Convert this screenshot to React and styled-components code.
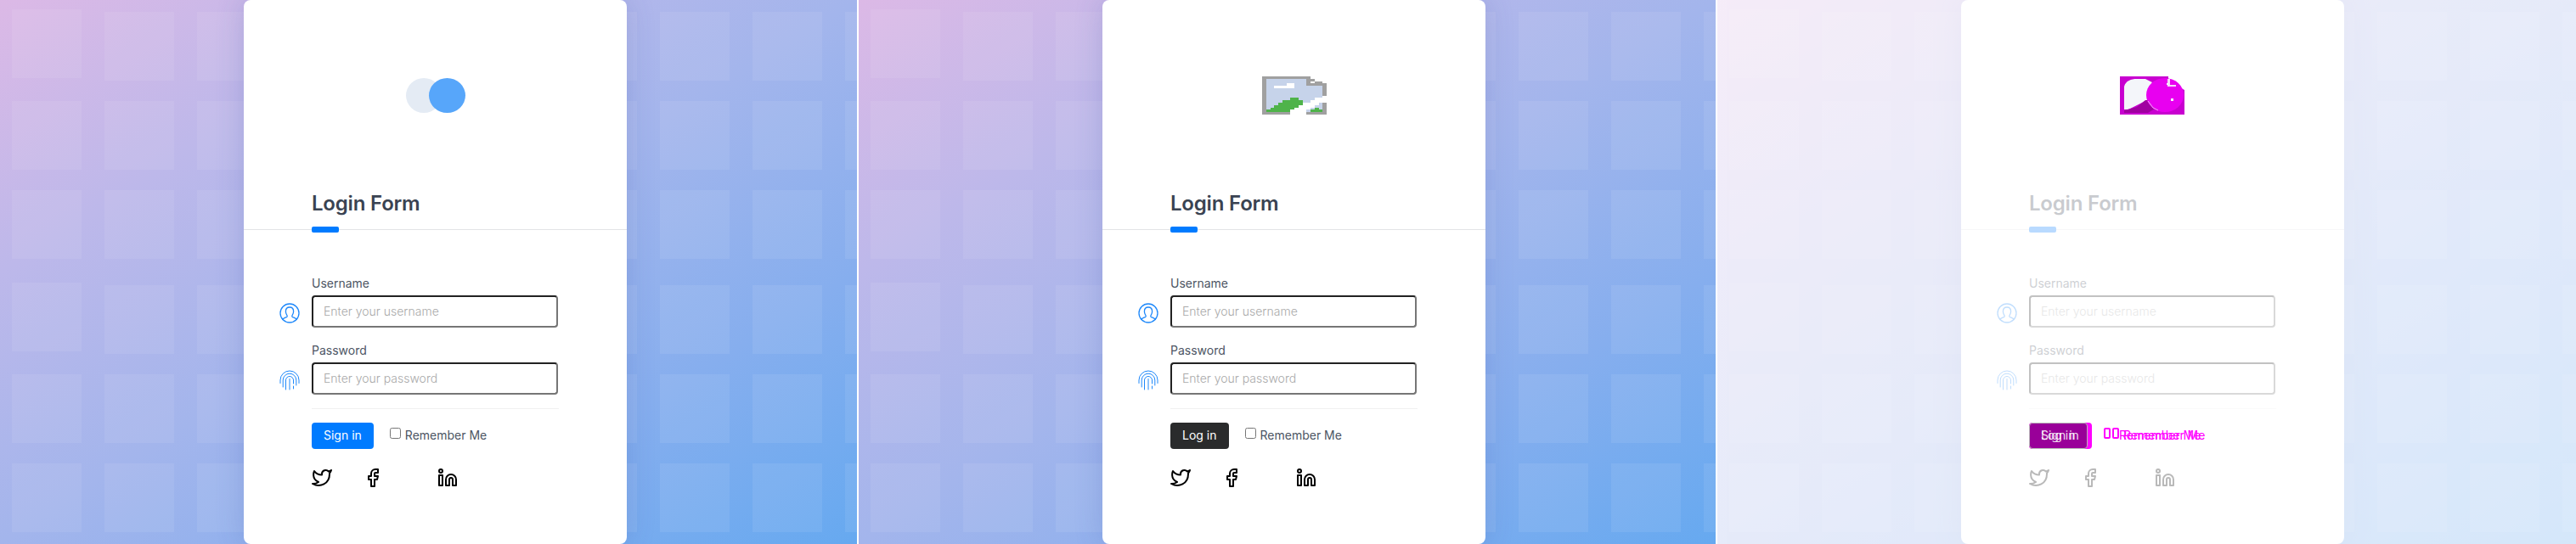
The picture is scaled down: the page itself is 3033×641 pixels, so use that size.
import React from "react"
import styled, { createGlobalStyle } from "styled-components"
import { FiTwitter, FiFacebook, FiLinkedin } from "react-icons/fi"

const GlobalStyle = createGlobalStyle`
  html, body {
    margin: 0;
    padding: 0;
    background: #fff;
    overflow: hidden;
  }
  * {
    box-sizing: border-box;
  }
`

const Page = styled.div`
  display: flex;
  gap: 2px;
  width: 3033px;
  height: 641px;
  background: #fff;
  font-family: Inter, "Noto Sans", sans-serif;
  overflow: hidden;
`

const Panel = styled.section`
  position: relative;
  flex: ${({ $last }) => ($last ? "1 0 1009px" : "0 0 1009px")};
  height: 641px;
  overflow: hidden;
`

const Faded = styled.div`
  position: relative;
  height: 100%;
  opacity: ${({ $amount }) => $amount};
`

const Backdrop = styled.div`
  position: relative;
  height: 100%;
  padding-left: 287px;
  background: linear-gradient(
    to bottom right,
    #dcb9e6 0%,
    #bdb8ea 25%,
    #a3b5ec 50%,
    #86aeee 75%,
    #66a9f0 100%
  );
`

const TileLayer = styled.div`
  position: absolute;
  inset: 0;
  padding: 14px 0 0 14px;
`

const TileRow = styled.div`
  display: flex;
  gap: 27px;
  margin-top: ${({ $gap }) => $gap}px;
`

const Tile = styled.div`
  flex: 0 0 82px;
  height: 81px;
  background: rgba(255, 255, 255, 0.08);
  transform: translateY(${({ $lift }) => ($lift ? -3 : 0)}px);
`

const Card = styled.div`
  position: relative;
  width: 451px;
  height: 641px;
  background: #fff;
  border-radius: 8px;
  box-shadow: 0 0 34px rgba(50, 70, 160, 0.2);
`

const LogoArea = styled.div`
  display: flex;
  align-items: center;
  justify-content: center;
  height: 225px;
`

const CardHeader = styled.div`
  position: relative;
  height: 46px;
  padding: 0 80px;
  border-bottom: 1px solid #e3e4e6;
`

const Title = styled.h2`
  margin: 0;
  font-size: 24px;
  line-height: 29px;
  font-weight: 600;
  letter-spacing: -0.2px;
  color: #3a4352;
`

const TitleBar = styled.span`
  position: absolute;
  left: 80px;
  bottom: -4px;
  width: 32px;
  height: 7px;
  border-radius: 2px;
  background: #007bff;
`

const Form = styled.form`
  padding: 52px 80px 0;
`

const Field = styled.div`
  margin-bottom: 16px;
`

const Label = styled.label`
  display: block;
  margin-bottom: 4px;
  font-size: 14px;
  line-height: 21px;
  color: #4c5563;
`

const FieldRow = styled.div`
  display: flex;
  align-items: center;
  gap: 14px;
  margin-left: -38px;
`

const FieldIcon = styled.svg`
  flex: 0 0 24px;
  width: 24px;
  height: 24px;
  margin-top: 3px;
  fill: none;
  stroke: #1e88fa;
  stroke-width: ${({ $thin }) => ($thin ? 1 : 1.3)};
  stroke-linecap: round;
`

const Input = styled.input`
  width: 290px;
  height: 38px;
  padding: 0 12px 2px;
  border-width: 2px;
  border-style: solid;
  border-color: #222 #767676 #767676 #222;
  border-radius: 4px;
  background: #fff;
  font-family: inherit;
  font-size: 14px;
  font-weight: 300;
  outline: none;

  &::placeholder {
    color: #a9a9a9;
  }
`

const Rule = styled.hr`
  height: 1px;
  margin: 0 0 16px;
  border: 0;
  background: #f0f0f0;
`

const Actions = styled.div`
  display: flex;
  align-items: center;
  height: 31px;
  visibility: ${({ $hidden }) => ($hidden ? "hidden" : "visible")};
`

const SubmitButton = styled.button`
  height: 31px;
  padding: 0 14px 2px;
  border: 0;
  border-radius: 4px;
  background: ${({ $dark }) => ($dark ? "#2a2b2c" : "#007bff")};
  color: #fff;
  font-family: inherit;
  font-size: 14px;
`

const Remember = styled.label`
  display: flex;
  align-items: center;
  margin-left: 19px;
  padding-bottom: 3px;
  font-size: 14px;
  color: #4c5563;
`

const Check = styled.input`
  width: 13px;
  height: 13px;
  margin: -3px 5px 0 0;
`

const Socials = styled.div`
  display: flex;
  margin-top: 22px;
`

const SocialLink = styled.a`
  display: block;
  width: ${({ $width }) => $width}px;
  height: 24px;
  color: #000;
`

const PixelIcon = styled.svg`
  display: block;
  width: 76px;
  height: 45px;
  shape-rendering: crispEdges;
`

const CirclesIcon = styled.svg`
  display: block;
  width: 76px;
  height: 45px;
`

const DiffLogo = styled.svg`
  position: absolute;
  left: 474px;
  top: 90px;
  width: 76px;
  height: 45px;
`

const DiffButton = styled.div`
  position: absolute;
  left: 367px;
  top: 498px;
  width: 74px;
  height: 31px;
  border-radius: 4px;
  background: #ff00ff;
`

const DiffButtonInner = styled.div`
  width: 69px;
  height: 31px;
  border: 1px solid #b9b9b9;
  border-radius: 4px;
  background: #990099;
`

const DiffButtonText = styled.span`
  position: absolute;
  top: -1px;
  left: ${({ $left }) => $left}px;
  font-size: 14px;
  line-height: 31px;
  color: #fff;
  opacity: 0.85;
  white-space: nowrap;
`

const DiffBox = styled.span`
  position: absolute;
  top: 504px;
  left: ${({ $left }) => $left}px;
  width: 8px;
  height: 13px;
  border: 2px solid #f0f;
  border-radius: 2px;
`

const DiffText = styled.span`
  position: absolute;
  top: 504px;
  left: ${({ $left }) => $left}px;
  font-size: 14px;
  line-height: 17px;
  color: #f0f;
  white-space: nowrap;
`

const tileRows = [0, 24, 24, 31, 24, 24]

const Tiles = () => (
  <TileLayer>
    {tileRows.map((gap, row) => (
      <TileRow key={row} $gap={gap}>
        {Array.from({ length: 10 }, (_, col) => (
          <Tile key={col} $lift={col === 0 && (row === 0 || row === 3)} />
        ))}
      </TileRow>
    ))}
  </TileLayer>
)

const UserIcon = () => (
  <FieldIcon viewBox="0 0 24 24">
    <circle cx="12" cy="12" r="11" />
    <path d="M3.800 19.500c1-2 4.400-2.300 5.200-3.400.4-.6.2-1.200-.2-1.800C7.900 13 7.400 11.500 7.400 9.900 7.400 7 9.300 5 12 5s4.600 2 4.600 4.900c0 1.600-.5 3.100-1.400 4.400-.4.6-.6 1.200-.2 1.800.8 1.100 4.200 1.400 5.200 3.400" />
  </FieldIcon>
)

const FingerprintIcon = () => (
  <FieldIcon $thin viewBox="0 0 24 24">
    <path d="M1 15.500V12a11 11 0 0 1 22 0v3.500" />
    <path d="M4.200 20V12a7.800 7.800 0 0 1 15.600 0v6" />
    <path d="M7.500 23V12a4.500 4.500 0 0 1 9 0v4M16.500 19v3" />
    <path d="M12 10.500V23" />
  </FieldIcon>
)

const CirclesLogo = () => (
  <CirclesIcon viewBox="0 0 76 45">
    <ellipse cx="24" cy="22.500" rx="21" ry="20.500" fill="#e4ebf4" />
    <ellipse cx="51.500" cy="22.500" rx="21.500" ry="20.500" fill="#57a6fa" />
  </CirclesIcon>
)

const brokenPixels = [
  "gggggggggggg....",
  "gssssssssssgg...",
  "gssssssssssgwgg.",
  "gssssswwsssggggg",
  "gsswwwwwsssssssg",
  "gssssssssssssssg",
  "gssssssssssssssg",
  "gssssssssssssssg",
  "gssssssssssssssw",
  "gssssssnnsssswww",
  "gssssnnnnnsswwww",
  "gsssnnnnnnwwwwsg",
  "gssnnnnnnwwwwssg",
  "gsnnnnnnwwwwsnsg",
  "gnnnnnnwwwwsnnng",
  "gggggggwwwwggggg",
]

const pixelColors = { g: "#a0a0a0", s: "#c6d3ea", n: "#4fb34a", w: "#fff" }

const BrokenImage = () => (
  <PixelIcon viewBox="0 0 16 16" preserveAspectRatio="none">
    {brokenPixels.map((line, y) =>
      line
        .split("")
        .map((c, x) =>
          c === "." ? null : (
            <rect key={`${x}-${y}`} x={x} y={y} width="1.02" height="1.02" fill={pixelColors[c]} />
          )
        )
    )}
  </PixelIcon>
)

const LoginCard = ({ logo, buttonText, dark, hideActions }) => (
  <Card>
    <LogoArea>{logo}</LogoArea>
    <CardHeader>
      <Title>Login Form</Title>
      <TitleBar />
    </CardHeader>
    <Form onSubmit={e => e.preventDefault()}>
      <Field>
        <Label>Username</Label>
        <FieldRow>
          <UserIcon />
          <Input placeholder="Enter your username" />
        </FieldRow>
      </Field>
      <Field>
        <Label>Password</Label>
        <FieldRow>
          <FingerprintIcon />
          <Input placeholder="Enter your password" />
        </FieldRow>
      </Field>
      <Rule />
      <Actions $hidden={hideActions}>
        <SubmitButton $dark={dark}>{buttonText}</SubmitButton>
        <Remember>
          <Check type="checkbox" />
          Remember Me
        </Remember>
      </Actions>
      <Socials>
        <SocialLink $width={60}>
          <FiTwitter size={24} />
        </SocialLink>
        <SocialLink $width={88}>
          <FiFacebook size={24} />
        </SocialLink>
        <SocialLink $width={24}>
          <FiLinkedin size={24} />
        </SocialLink>
      </Socials>
    </Form>
  </Card>
)

const Screen = props => (
  <Backdrop>
    <Tiles />
    <LoginCard {...props} />
  </Backdrop>
)

export default function App() {
  return (
    <Page>
      <GlobalStyle />
      <Panel>
        <Screen logo={<CirclesLogo />} buttonText="Sign in" />
      </Panel>
      <Panel>
        <Screen logo={<BrokenImage />} buttonText="Log in" dark />
      </Panel>
      <Panel $last>
        <Faded $amount={0.27}>
          <Screen logo={null} buttonText="Log in" hideActions />
        </Faded>
        <DiffLogo viewBox="0 0 76 45">
          <path d="M0 0h57v6l19 10v29H0z" fill="#c800d0" />
          <path d="M5 12C7 5 13 3 20 3h10l8 4-6 12v9l-12 6-10 5H5z" fill="#f4f6fa" />
          <path d="M5 40l15-4 10-8h19v5L33 43H5z" fill="#a000a0" />
          <ellipse cx="53" cy="22" rx="22" ry="20" fill="#e800f0" />
          <path d="M56 3h3v7h7v2h-10z" fill="#f6d8f8" />
          <path d="M60 26h3v3h-3zM55 8h2v2h-2z" fill="#f4f6fa" />
          <path d="M33 29l6 8 6 3" fill="none" stroke="#f4f6fa" strokeWidth="0.7" />
        </DiffLogo>
        <DiffButton>
          <DiffButtonInner />
          <DiffButtonText $left={14}>Sign in</DiffButtonText>
          <DiffButtonText $left={14}>Log in</DiffButtonText>
        </DiffButton>
        <DiffBox $left={455} />
        <DiffBox $left={465} />
        <DiffText $left={473}>Remember Me</DiffText>
        <DiffText $left={478}>Remember Me</DiffText>
      </Panel>
    </Page>
  )
}
